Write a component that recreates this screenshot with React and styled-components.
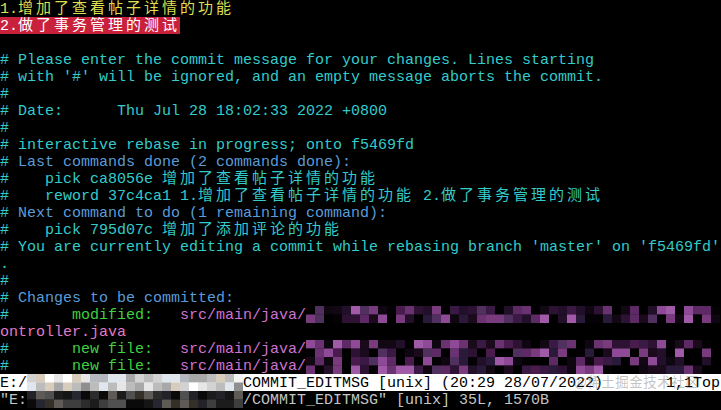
import React from "react";
import styled, { createGlobalStyle } from "styled-components";

const Global = createGlobalStyle`
  html, body { margin: 0; padding: 0; background: #000; }
  #root { width: 721px; height: 410px; }
`;

const tones = {
  yellow: "#dfdf50",
  cyan: "#33cbcb",
  blue: "#5a9cd9",
  green: "#3fd13f",
  path: "#cf72d3",
  pink: "#e07ac6",
  white: "#ffffff",
  black: "#000000",
  gray: "#c4c4c4",
};

const Screen = styled.div`
  position: relative;
  width: 721px;
  height: 410px;
  overflow: hidden;
  background: #000;
  font-family: "Liberation Mono", "DejaVu Sans Mono", monospace;
  font-size: 15px;
  display: flex;
  flex-direction: column;
`;

const Line = styled.div`
  height: 17px;
  line-height: 20px;
  white-space: pre;
  color: ${(p) => tones[p.$tone || "cyan"]};
  background: ${(p) => p.$bg || "transparent"};
`;

const Seg = styled.span`
  color: ${(p) => tones[p.$tone]};
`;

const Han = styled.span`
  font-family: "Noto Sans CJK SC", "Noto Sans CJK JP", sans-serif;
  font-size: 15px;
  line-height: 14px;
  letter-spacing: 3px;
`;

const Highlight = styled.span`
  display: inline-block;
  height: 17px;
  vertical-align: top;
  background: #c9213b;
  color: #fff;
`;

const MosaicSvg = styled.svg`
  display: inline-block;
  vertical-align: top;
`;

const Watermark = styled.div`
  position: absolute;
  left: 574px;
  top: 373px;
  font-family: "Noto Sans CJK SC", sans-serif;
  font-size: 13.5px;
  line-height: 17px;
  color: rgba(120, 120, 120, 0.45);
  white-space: pre;
  letter-spacing: 0.5px;
`;

const palettes = {
  purple: [
    "#000000", "#000000", "#000000", "#050205", "#0e0610", "#1a0a1c",
    "#2e1234", "#4a1c4e", "#5e2a66", "#7a3a7e", "#8e4a96", "#3a1a44",
    "#6a3270", "#a05aa8", "#22102a", "#2a1a3a", "#50305e", "#120814",
  ],
  light: [
    "#f4f4f4", "#e6e6e6", "#d2d2d2", "#bcbcbc", "#a8a8a8", "#c8c4be",
    "#dfe6ee", "#8f8f8f", "#ffffff", "#b4b8be", "#d8ccbc",
  ],
  dark: [
    "#0a0a0a", "#1c1c1c", "#2c2c2c", "#3e3e3e", "#505050", "#262630",
    "#343028", "#151515", "#5e5a56", "#222228",
  ],
};

function Mosaic({ cols, palette, seed }) {
  const bw = 9;
  const bh = 8.5;
  const width = cols * bw;
  let s = seed * 9301 + 49297;
  const rnd = () => {
    s = (s * 1103515245 + 12345) % 2147483648;
    return s / 2147483648;
  };
  const pal = palettes[palette];
  const rects = [];
  for (let r = 0; r < 2; r++) {
    for (let c = 0; c < cols; c++) {
      const col = pal[Math.floor(rnd() * pal.length)];
      rects.push(
        <rect key={r + "-" + c} x={c * bw} y={r * bh} width={bw} height={bh + 0.2} fill={col} />
      );
    }
  }
  return (
    <MosaicSvg width={width} height={17} viewBox={`0 0 ${width} 17`}>
      {rects}
    </MosaicSvg>
  );
}

export default function App() {
  return (
    <>
      <Global />
      <Screen>
        <Line $tone="yellow">1.<Han>增加了查看帖子详情的功能</Han></Line>
        <Line>
          <Highlight>2.<Han>做了事务管理的测试</Han></Highlight>
        </Line>
        <Line> </Line>
        <Line># Please enter the commit message for your changes. Lines starting</Line>
        <Line># with '#' will be ignored, and an empty message aborts the commit.</Line>
        <Line>#</Line>
        <Line># Date:      Thu Jul 28 18:02:33 2022 +0800</Line>
        <Line>#</Line>
        <Line># interactive rebase in progress; onto f5469fd</Line>
        <Line>
          # <Seg $tone="blue">Last commands done (2 commands done):</Seg>
        </Line>
        <Line>
          #    pick ca8056e <Han>增加了查看帖子详情的功能</Han>
        </Line>
        <Line>
          #    reword 37c4ca1 1.<Han>增加了查看帖子详情的功能</Han> 2.<Han>做了事务管理的测试</Han>
        </Line>
        <Line>
          # <Seg $tone="blue">Next command to do (1 remaining command):</Seg>
        </Line>
        <Line>
          #    pick 795d07c <Han>增加了添加评论的功能</Han>
        </Line>
        <Line># You are currently editing a commit while rebasing branch 'master' on 'f5469fd'</Line>
        <Line>.</Line>
        <Line>#</Line>
        <Line>
          # <Seg $tone="blue">Changes to be committed:</Seg>
        </Line>
        <Line>
          #       <Seg $tone="green">modified:</Seg>   <Seg $tone="path">src/main/java/</Seg>
          <Mosaic cols={46} palette="purple" seed={7} />
        </Line>
        <Line $tone="pink">ontroller.java</Line>
        <Line>
          #       <Seg $tone="green">new file:</Seg>   <Seg $tone="path">src/main/java/</Seg>
          <Mosaic cols={45} palette="purple" seed={19} />
        </Line>
        <Line>
          #       <Seg $tone="green">new file:</Seg>   <Seg $tone="path">src/main/java/</Seg>
          <Mosaic cols={45} palette="purple" seed={31} />
        </Line>
        <Line $tone="black" $bg="#ffffff">
          E:/<Mosaic cols={24} palette="light" seed={5} />COMMIT_EDITMSG [unix] (20:29 28/07/2022)       1,1Top
        </Line>
        <Line $tone="gray">
          "E:<Mosaic cols={24} palette="dark" seed={11} />/COMMIT_EDITMSG" [unix] 35L, 1570B
        </Line>
        <Watermark>@稀土掘金技术社区</Watermark>
      </Screen>
    </>
  );
}
